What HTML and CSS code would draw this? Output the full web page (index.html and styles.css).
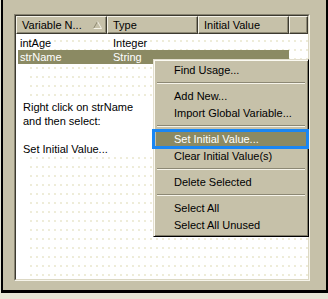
FILE: index.html
```html
<!DOCTYPE html>
<html>
<head>
<meta charset="utf-8">
<link rel="stylesheet" href="styles.css">
</head>
<body>
<div class="frame">
  <div class="panel">
    <div class="panel-in">
      <div class="header">
        <div class="hcell">Variable N...
          <svg class="sort" width="9" height="8" viewBox="0 0 9 8"><path d="M0.5 7.5 L4.5 0.5" stroke="#8c8870" fill="none"/><path d="M4.5 0.5 L8.5 7.5 L0.5 7.5" stroke="#f4f2e6" fill="none"/></svg>
        </div>
        <div class="hcell">Type</div>
        <div class="hcell">Initial Value</div>
        <div class="hcell last"></div>
      </div>
      <div class="body">
        <div class="row"><span class="c1">intAge</span><span>Integer</span></div>
        <div class="row sel"><span class="c1">strName</span><span>String</span></div>
        <div class="note">Right click on strName<br>and then select:<br><br>Set Initial Value...</div>
      </div>
    </div>
  </div>
</div>
<div class="menu">
  <div class="item">Find Usage...</div>
  <div class="sep"></div>
  <div class="item">Add New...</div>
  <div class="item">Import Global Variable...</div>
  <div class="sep"></div>
  <div class="item hi">Set Initial Value...</div>
  <div class="item">Clear Initial Value(s)</div>
  <div class="sep"></div>
  <div class="item">Delete Selected</div>
  <div class="sep"></div>
  <div class="item">Select All</div>
  <div class="item">Select All Unused</div>
</div>
<div class="callout"></div>
</body>
</html>
```
FILE: styles.css
```css
html, body {
  margin: 0;
  padding: 0;
}
body {
  width: 328px;
  height: 299px;
  background: #e6e6d6;
  font-family: "Liberation Sans", Arial, sans-serif;
  font-size: 11px;
  color: #000;
  position: relative;
  overflow: hidden;
}
.frame {
  margin-left: 1px;
  background: #c6c1a9;
  border-left: 2px solid #000;
  border-right: 2px solid #000;
  border-bottom: 3px solid #000;
  padding: 14px 0 0 11px;
  box-sizing: content-box;
  width: 312px;
  height: 276px;
}
.panel {
  width: 296px;
  height: 267px;
  box-sizing: border-box;
  border-top: 1px solid #868270;
  border-left: 1px solid #868270;
  border-right: 1px solid #f6f4ea;
  border-bottom: 1px solid #f6f4ea;
}
.panel-in {
  height: 100%;
  box-sizing: border-box;
  border-top: 1px solid #3c3a30;
  border-left: 1px solid #3c3a30;
  border-right: 1px solid #dcd8c4;
  border-bottom: 1px solid #dcd8c4;
  background: #fff;
  display: flex;
  flex-direction: column;
}
.header {
  display: flex;
  height: 18px;
  flex: none;
}
.hcell {
  width: 91px;
  box-sizing: border-box;
  background: #c6c1a9;
  border-top: 1px solid #f4f2e8;
  border-left: 1px solid #f4f2e8;
  border-right: 1px solid #3c3a30;
  border-bottom: 1px solid #3c3a30;
  box-shadow: inset -1px -1px 0 #8c8874;
  padding-left: 5px;
  line-height: 16px;
  position: relative;
  white-space: nowrap;
}
.hcell.last {
  flex: 1;
  width: auto;
}
.sort {
  position: absolute;
  left: 76px;
  top: 4px;
}
.body {
  flex: 1;
  padding-top: 2px;
  background:
    linear-gradient(#fff, #fff) 0 0 / 14px 100% no-repeat,
    radial-gradient(circle at 1px 1px, #eeecd8 0.7px, transparent 1px) 14px 6px / 6px 9px;
}
.row {
  display: flex;
  height: 14px;
  line-height: 14px;
  margin-left: 2px;
  width: 271px;
  padding-left: 2px;
  box-sizing: border-box;
}
.row .c1 {
  width: 93px;
}
.row.sel {
  background: #8b8a63;
  color: #fff;
}
.note {
  margin-top: 36px;
  padding-left: 7px;
  line-height: 14px;
  width: 130px;
  background: #fff;
}
.menu {
  position: absolute;
  left: 153px;
  top: 59px;
  width: 156px;
  box-sizing: border-box;
  background: #c6c1a9;
  border-top: 1px solid #e2dece;
  border-left: 1px solid #e2dece;
  border-right: 1px solid #000;
  border-bottom: 1px solid #000;
  box-shadow: inset 1px 1px 0 #fbfaf2, inset -1px -1px 0 #807c68;
  padding: 2px;
}
.item {
  height: 17px;
  line-height: 17px;
  padding-left: 18px;
  white-space: nowrap;
}
.item.hi {
  background: #8b8a63;
  color: #fff;
}
.sep {
  height: 9px;
  margin: 0 1px;
  background:
    linear-gradient(#8c8874, #8c8874) 0 3px / 100% 1px no-repeat,
    linear-gradient(#f6f4ea, #f6f4ea) 0 4px / 100% 1px no-repeat;
}
.callout {
  position: absolute;
  left: 152px;
  top: 129px;
  width: 157px;
  height: 20px;
  box-sizing: border-box;
  border: 3px solid #1a86f2;
}
```
